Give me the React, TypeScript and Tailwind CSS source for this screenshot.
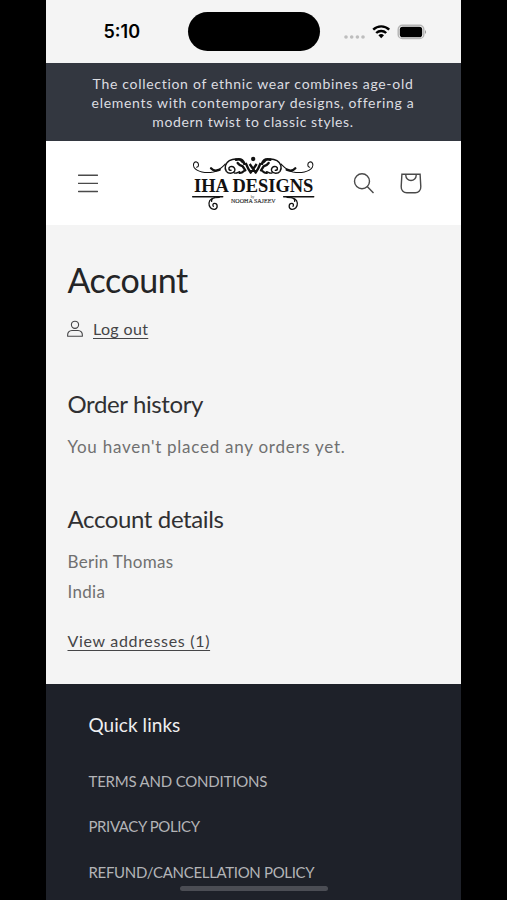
import type { ReactNode } from 'react';

const policyLinks = [
  { label: 'TERMS AND CONDITIONS', spacing: 'tracking-[-0.2px]' },
  { label: 'PRIVACY POLICY', spacing: 'tracking-[-0.4px]' },
  { label: 'REFUND/CANCELLATION POLICY', spacing: 'tracking-[-0.33px]' },
];

function StatusBar() {
  return (
    <div className="flex h-[63px] items-center bg-[#f4f4f4] text-black">
      <div className="w-[142px] pl-[58px] pt-px font-[Inter,sans-serif] text-[18px] leading-[22px] font-semibold">
        5:10
      </div>
      <div className="h-[39px] w-[132px] rounded-full bg-black" />
      <svg className="ml-[22px] h-[18px] w-[86px]" viewBox="0 0 86 18" fill="none">
        <g fill="#bdbdbd">
          <circle cx="4" cy="14" r="1.8" />
          <circle cx="9.7" cy="14" r="1.8" />
          <circle cx="15.4" cy="14" r="1.8" />
          <circle cx="21" cy="14" r="1.8" />
        </g>
        <g stroke="#000" strokeWidth="2.4">
          <path d="M31.2 6.6a11.5 11.5 0 0 1 16 0" />
          <path d="M34.2 10a7.2 7.2 0 0 1 10 0" />
        </g>
        <path d="M36.4 12.3a4 4 0 0 1 5.6 0l-2.8 2.9z" fill="#000" />
        <rect x="56.2" y="2.2" width="25.6" height="13.4" rx="4.2" stroke="#b4b4b4" strokeWidth="1.4" />
        <rect x="57.8" y="3.7" width="22.4" height="10.5" rx="2.8" fill="#000" />
        <path d="M83 7q2.2 2 0 4z" fill="#999" />
      </svg>
    </div>
  );
}

// One half of the scrollwork, mirrored for the other side
function Scrollwork() {
  return (
    <g fill="none" stroke="#111" strokeLinecap="round">
      <path d="M50 67c7-1 8-13 0-16c-9-2-12 9-8 16c9 14 35 18 58 14c18-4 26-14 36-24" strokeWidth="3.2" />
      <path d="M93 70c7 8 17 8 26 4" strokeWidth="7" />
      <path d="M153 76c-7 1-9-8-2-11c9-3 16 5 13 13c-4 9-19 9-25 1c-7-10-3-25 9-32c13-7 31-8 39 5" strokeWidth="4.4" />
      <path d="M163 84c8 2 11-3 16-4" strokeWidth="4" />
      <path d="M168 44c14-4 22 4 25 12" strokeWidth="8" />
      <path d="M173 54c5 7 9 8 15 10l8 12" strokeWidth="7" />
      <path d="M178 84c6 1 10-2 14-6" strokeWidth="6" />
      <path d="M38 155h90" strokeWidth="4.5" />
      <path d="M118 157c-17 0-30 4-31 17c-1 12 7 20 17 19c11-3 9-18 0-18c-5 0-7 5-4 9M104 158c-7 2-10 6-9 11" strokeWidth="3.8" />
    </g>
  );
}

function Logo() {
  return (
    <svg className="h-[75px] w-[145px]" viewBox="0 0 435 225">
      <Scrollwork />
      <g transform="translate(439 0) scale(-1 1)">
        <Scrollwork />
      </g>
      <circle cx="219.5" cy="42" r="6.5" fill="#111" />
      <path
        d="M197 54c4 10 8 19 15 29l18-26M242 54c-4 10-8 19-15 29l-18-26"
        fill="none"
        stroke="#111"
        strokeWidth="7"
        strokeLinejoin="round"
      />
      <text
        x="42"
        y="142"
        textLength="358"
        lengthAdjust="spacingAndGlyphs"
        fontFamily="'Liberation Serif', serif"
        fontSize="56"
        fontWeight="700"
        fill="#111"
      >
        IHA DESIGNS
      </text>
      <text x="212" y="160" fontFamily="'Liberation Serif', serif" fontSize="11" fill="#333">
        by
      </text>
      <text
        x="153"
        y="175"
        textLength="134"
        lengthAdjust="spacingAndGlyphs"
        fontFamily="'Liberation Serif', serif"
        fontSize="18"
        fill="#333"
        stroke="#333"
        strokeWidth="0.5"
      >
        NOOHA SAJEEV
      </text>
    </svg>
  );
}

function Header() {
  return (
    <header className="flex h-[84px] items-center bg-white text-[#4a4a4a]">
      <svg className="ml-8 h-5 w-5" viewBox="0 0 20 20" fill="none" stroke="currentColor" strokeWidth="1.4">
        <path d="M.5 2.3h19M.5 10.4h19M.5 18.5h19" strokeLinecap="round" />
      </svg>
      <div className="ml-[82px] pb-px">
        <Logo />
      </div>
      <svg className="ml-[28px] h-[22px] w-[22px]" viewBox="0 0 22 22" fill="none" stroke="currentColor" strokeWidth="1.4">
        <circle cx="9" cy="9.2" r="7.5" />
        <path d="M14.2 14.6l6.3 6.3" />
      </svg>
      <svg className="ml-[25px] h-[22px] w-[22px]" viewBox="0 0 22 22" fill="none" stroke="currentColor" strokeWidth="1.4">
        <path d="M1.9 2.2h18.2l.7 12.4c.2 3.6-2.2 6.2-5.6 6.2H6.8c-3.4 0-5.8-2.6-5.6-6.2z" />
        <path d="M5.8 2.2v1.1a5.2 5.2 0 0 0 10.4 0V2.2" />
      </svg>
    </header>
  );
}

function SectionTitle({ children }: { children: ReactNode }) {
  return <h2 className="text-[24px] leading-[32px] tracking-[-0.38px] text-[#303032]">{children}</h2>;
}

export default function App() {
  return (
    <div className="flex h-[900px] w-[507px] justify-center overflow-hidden bg-black font-[Lato,sans-serif]">
      <div className="relative mr-px flex w-[415px] flex-col bg-[#f4f4f4]">
        <StatusBar />
        <div className="h-[78px] bg-[#333740] pt-[11px] text-center text-[14px] leading-[19px] whitespace-nowrap text-[#dcdde0]">
          <p className="tracking-[0.7px]">The collection of ethnic wear combines age-old</p>
          <p className="tracking-[0.7px]">elements with contemporary designs, offering a</p>
          <p className="tracking-[0.6px]">modern twist to classic styles.</p>
        </div>
        <Header />

        <main className="h-[459px] pl-[22px] whitespace-nowrap">
          <h1 className="pt-[34px] text-[34px] leading-[42px] tracking-[-0.5px] text-[#242426]">Account</h1>
          <a className="mt-[15px] -ml-px flex h-[26px] items-center text-[#454547]">
            <svg className="h-[18px] w-4" viewBox="0 0 16 18" fill="none" stroke="currentColor" strokeWidth="1.1">
              <circle cx="8" cy="4.8" r="3.6" />
              <path d="M.7 16.3c-.5-4 1.7-5.8 4.3-5.8h6c2.6 0 4.8 1.8 4.3 5.8z" />
            </svg>
            <span className="ml-[10.5px] text-[16px] leading-[26px] tracking-[0.35px] underline decoration-1 underline-offset-[3px]">
              Log out
            </span>
          </a>

          <section className="pt-[46px]">
            <SectionTitle>Order history</SectionTitle>
            <p className="pt-[12px] text-[17px] leading-[30px] tracking-[0.74px] text-[#707070]">
              You haven't placed any orders yet.
            </p>
          </section>

          <section className="pt-[41px]">
            <SectionTitle>Account details</SectionTitle>
            <p className="pt-[12px] text-[17px] leading-[29.5px] tracking-[0.3px] text-[#707070]">
              Berin Thomas
              <br />
              India
            </p>
            <a className="mt-[20px] block text-[16px] leading-[30px] tracking-[0.68px] text-[#454547] underline decoration-1 underline-offset-[3px]">
              View addresses (1)
            </a>
          </section>
        </main>

        <footer className="h-[216px] bg-[#1e2129] pl-[43px] whitespace-nowrap">
          <h2 className="pt-[27px] text-[19px] leading-[28px] tracking-[0.05px] text-[#eeeeef]">Quick links</h2>
          <ul className="pt-[19.5px]">
            {policyLinks.map((link) => (
              <li key={link.label} className="h-[45.5px] text-[15px] leading-[45px] text-[#b3b4b7]">
                <a className={link.spacing}>{link.label}</a>
              </li>
            ))}
          </ul>
        </footer>
        <div className="absolute top-[886px] left-[134px] h-[5px] w-[148px] rounded-full bg-[#4b4d54]" />
      </div>
    </div>
  );
}
